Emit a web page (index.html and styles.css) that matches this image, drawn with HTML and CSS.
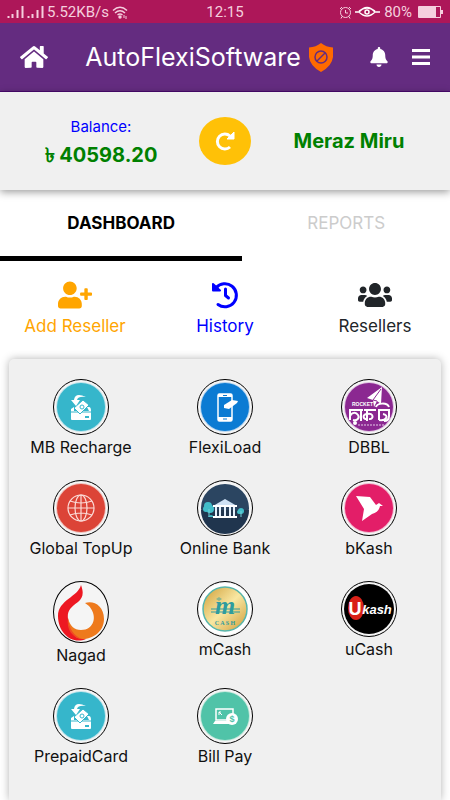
FILE: index.html
```
<!DOCTYPE html>
<html lang="en">
<head>
  <meta charset="UTF-8">
  <meta name="viewport" content="width=device-width, initial-scale=1.0">
  <title>AutoFlexiSoftware</title>
  <link rel="stylesheet" href="styles.css">
</head>
<body>
  <svg width="0" height="0" class="sprite" aria-hidden="true">
    <symbol id="deposit" viewBox="0 0 54 54">
      <circle cx="27" cy="27" r="25" fill="#bfe3ea"/>
      <circle cx="27" cy="27" r="24" fill="#36b6cb"/>
      <path d="M17 29l3-2v4h15l-2-4h2q2 0 2 4v8q0 1-1 1H18q-1 0-1-1z" fill="#fff"/>
      <path d="M17 32h20" stroke="#36b6cb"/>
      <path d="M29 20l6 5-9 9-6-6z" fill="#fff" stroke="#36b6cb"/>
      <circle cx="28" cy="27" r="2" fill="none" stroke="#36b6cb"/>
      <path d="M31 37h4" stroke="#36b6cb" stroke-width="2"/>
      <path d="M32 17Q21 12 20 20h-3l5 6 4-6h-3q1-4 9-3z" fill="#fff"/>
    </symbol>
    <symbol id="signal" viewBox="0 0 17 12">
      <path d="M1.5 10v2M5.5 8v4M10.5 4v8M15.5 0v12" stroke="currentColor" stroke-width="2"/>
    </symbol>
  </svg>

  <div class="status">
    <div class="status-left">
      <svg width="17" height="12"><use href="#signal"/></svg>
      <svg width="17" height="12"><use href="#signal"/></svg>
      <span>5.52KB/s</span>
      <svg width="16" height="13" viewBox="0 0 16 13" fill="none" stroke="currentColor" stroke-width="1.5">
        <path d="M1 4.5Q8-2 15 4.5M3 7Q8 2.500 13 7M5.500 9Q8 7 10.500 9"/>
        <circle cx="8" cy="11" r="1" fill="currentColor"/>
        <path d="M12 9v3M14 10v3" stroke-width="1"/>
      </svg>
    </div>
    <span>12:15</span>
    <div class="status-right">
      <svg width="13" height="13" viewBox="0 0 13 13" fill="none" stroke="currentColor">
        <circle cx="6.5" cy="6.5" r="5"/>
        <path d="M6.5 4v3H9M1 3l2-2M12 3l-2-2M3 10.5l-1 2M10 10.5l1 2"/>
      </svg>
      <svg class="eye" width="26" height="12" viewBox="0 0 26 12" fill="none" stroke="currentColor" stroke-width="1.5">
        <path d="M0 6h4Q12-3 20 6h5M4 6Q12 14 20 6M4 5Q12-1 20 5"/>
        <circle cx="12" cy="6" r="2"/>
      </svg>
      <span>80%</span>
      <svg class="battery" width="25" height="12" viewBox="0 0 25 12">
        <path d="M.5 .5h22v11h-22z" fill="none" stroke="currentColor"/>
        <path d="M1 1h17v10H1zM23 4h2v4h-2z" fill="currentColor"/>
      </svg>
    </div>
  </div>

  <header class="navbar">
    <a class="home" href="#" aria-label="Home">
      <svg width="28" height="26" viewBox="0 0 576 512" fill="currentColor"><path d="M280.37 148.26L96 300.11V464a16 16 0 0 0 16 16l112.06-.29a16 16 0 0 0 15.92-16V368a16 16 0 0 1 16-16h64a16 16 0 0 1 16 16v95.64a16 16 0 0 0 16 16.05L464 480a16 16 0 0 0 16-16V300L295.67 148.26a12.19 12.19 0 0 0-15.3 0zM571.6 251.47L488 182.56V44.05a12 12 0 0 0-12-12h-56a12 12 0 0 0-12 12v72.61L318.47 43a48 48 0 0 0-61 0L4.34 251.47a12 12 0 0 0-1.6 16.9l25.5 31A12 12 0 0 0 45.15 301l235.22-193.74a12.19 12.19 0 0 1 15.3 0L530.9 301a12 12 0 0 0 16.9-1.6l25.5-31a12 12 0 0 0-1.7-16.93z"/></svg>
    </a>
    <div class="brand">
      <h1>AutoFlexiSoftware</h1>
      <svg width="24" height="29" viewBox="0 0 24 29">
        <path d="M12 0Q17 4 24 4.5V14Q23 23 12 29 1 23 0 14V4.5Q7 4 12 0z" fill="#ff6a00"/>
        <circle cx="12" cy="14" r="6" fill="none" stroke="#642c80" stroke-width="1.5"/>
        <path d="M8 18l8-8" stroke="#642c80" stroke-width="1.5"/>
      </svg>
    </div>
    <button type="button" aria-label="Notifications">
      <svg width="18" height="20" viewBox="0 0 448 512" fill="currentColor"><path d="M224 512c35.32 0 63.97-28.65 63.97-64H160.03c0 35.35 28.65 64 63.97 64zm215.39-149.71c-19.32-20.76-55.47-51.99-55.47-154.29 0-77.7-54.48-139.9-127.94-155.16V32c0-17.67-14.32-32-31.98-32s-31.98 14.33-31.98 32v20.84C118.56 68.1 64.08 130.3 64.08 208c0 102.3-36.15 133.53-55.47 154.29-6 6.45-8.66 14.16-8.61 21.71.11 16.4 12.98 32 32.1 32h383.8c19.12 0 32-15.6 32.1-32 .05-7.55-2.61-15.27-8.61-21.71z"/></svg>
    </button>
    <button type="button" class="menu" aria-label="Menu">
      <svg width="18" height="16" viewBox="0 0 18 16"><path d="M0 1.5h18M0 8h18M0 14.5h18" stroke="currentColor" stroke-width="3"/></svg>
    </button>
  </header>

  <section class="account">
    <div class="balance">
      <span class="balance-label">Balance:</span>
      <strong>৳ 40598.20</strong>
    </div>
    <button type="button" class="refresh" aria-label="Refresh balance">
      <svg width="20" height="20" viewBox="0 0 20 20" fill="none" stroke="currentColor">
        <path d="M15 5A7.5 7.500 0 1 0 15 16" stroke-width="3"/>
        <path d="M19 1v7h-7z" fill="currentColor" stroke-linejoin="round"/>
      </svg>
    </button>
    <strong>Meraz Miru</strong>
  </section>

  <nav class="tabs">
    <a class="active" href="#">DASHBOARD</a>
    <a href="#">REPORTS</a>
  </nav>

  <div class="actions">
    <a class="add" href="#">
      <svg width="34" height="28" viewBox="0 0 640 512" fill="currentColor"><path d="M624 208h-64v-64c0-8.8-7.2-16-16-16h-32c-8.8 0-16 7.2-16 16v64h-64c-8.8 0-16 7.2-16 16v32c0 8.8 7.2 16 16 16h64v64c0 8.8 7.2 16 16 16h32c8.8 0 16-7.2 16-16v-64h64c8.8 0 16-7.2 16-16v-32c0-8.8-7.2-16-16-16zm-400 48c70.7 0 128-57.3 128-128S294.7 0 224 0 96 57.3 96 128s57.3 128 128 128zm89.6 32h-16.7c-22.2 10.2-46.9 16-72.9 16s-50.6-5.8-72.9-16h-16.7C60.2 288 0 348.2 0 422.4V464c0 26.5 21.5 48 48 48h352c26.5 0 48-21.5 48-48v-41.6c0-74.2-60.2-134.4-134.4-134.4z"/></svg>
      Add Reseller
    </a>
    <a class="history" href="#">
      <svg width="28" height="28" viewBox="0 0 28 28" fill="none" stroke="currentColor" stroke-width="3" stroke-linecap="round" stroke-linejoin="round">
        <path d="M5 7A11.5 11.5 0 1 1 7 23.5"/>
        <path d="M14.5 8v6.5l3 2.5"/>
        <path d="M2 3v6.5h7z" fill="currentColor" stroke-width="2"/>
      </svg>
      History
    </a>
    <a class="resellers" href="#">
      <svg width="34" height="28" viewBox="0 0 640 512" fill="currentColor"><path d="M96 224c35.3 0 64-28.7 64-64s-28.7-64-64-64-64 28.7-64 64 28.7 64 64 64zm448 0c35.3 0 64-28.7 64-64s-28.7-64-64-64-64 28.7-64 64 28.7 64 64 64zm32 32h-64c-17.6 0-33.5 7.1-45.1 18.6 40.3 22.1 68.9 62 75.1 109.4h66c17.7 0 32-14.3 32-32v-32c0-35.3-28.7-64-64-64zm-256 0c61.9 0 112-50.1 112-112S381.9 32 320 32 208 82.1 208 144s50.1 112 112 112zm76.8 32h-8.3c-20.8 10-43.9 16-68.5 16s-47.6-6-68.5-16h-8.3C179.6 288 128 339.6 128 403.2V432c0 26.5 21.5 48 48 48h288c26.5 0 48-21.5 48-48v-28.8c0-63.6-51.6-115.2-115.2-115.2zm-223.7-13.4C161.5 263.1 145.6 256 128 256H64c-35.3 0-64 28.7-64 64v32c0 17.7 14.3 32 32 32h65.9c6.3-47.4 34.9-87.3 75.2-109.4z"/></svg>
      Resellers
    </a>
  </div>

  <main class="services">
    <a href="#">
      <svg class="logo"><use href="#deposit"/></svg>
      MB Recharge
    </a>
    <a href="#">
      <svg class="logo" viewBox="0 0 54 54">
        <circle cx="27" cy="27" r="25" fill="#b5d4ee"/>
        <circle cx="27" cy="27" r="24" fill="#0b7bd3"/>
        <rect x="20" y="14" width="14" height="27" rx="1.5" fill="none" stroke="#fff" stroke-width="1.5"/>
        <path d="M20 14h14v3H20zM20 37h14v4H20z" fill="#fff"/>
        <path d="M25 15.5h4M25 39h4" stroke="#0b7bd3"/>
        <path d="M26 25l8-5 6 1-1 2-8 6-5-1z" fill="#fff"/>
      </svg>
      FlexiLoad
    </a>
    <a href="#">
      <svg class="logo" viewBox="0 0 54 54">
        <circle cx="27" cy="27" r="25" fill="#dfc3e1"/>
        <circle cx="27" cy="27" r="24" fill="#8b2891"/>
        <path d="M40 7L25 18l6 2 1 7 3-6 4 3z" fill="#fff"/>
        <path d="M39 9l-8 11 4 1" fill="none" stroke="#8b2891"/>
        <text x="10" y="26" class="rocket">ROCKET</text>
        <g fill="none" stroke="#fff" stroke-width="2" stroke-linejoin="round">
          <path d="M7 30h14M8 30v10M8 36c2-4 6-4 8-1s-1 6-5 5M19 30v11M22 30h12M25 30v11M25 34c-5 0-4 6 0 5M25 34c7-2 7 6 2 5M36 30h12M37 30v10M37 40c8 1 10-5 4-6M34 27c1-4 11-5 13 0M47 30v6c0 3-2 5-5 5"/>
        </g>
        <circle cx="13" cy="43" r="2" fill="#fff"/>
        <path d="M16 45h26" stroke="#e5c9e7" stroke-dasharray="2 1"/>
      </svg>
      DBBL
    </a>
    <a href="#">
      <svg class="logo" viewBox="0 0 54 54">
        <circle cx="27" cy="27" r="25" fill="#efc2bd"/>
        <circle cx="27" cy="27" r="24" fill="#dc4437"/>
        <g fill="none" stroke="#fbdcd8" stroke-width="1.2">
          <circle cx="27" cy="27" r="13"/>
          <ellipse cx="27" cy="27" rx="6" ry="13"/>
          <path d="M27 14v26M14 27h26M16 20q11 4 22 0M16 34q11-4 22 0"/>
        </g>
      </svg>
      Global TopUp
    </a>
    <a href="#">
      <svg class="logo" viewBox="0 0 54 54">
        <circle cx="27" cy="27" r="24" fill="#2b4561"/>
        <path d="M3 29h48a24 24 0 0 1-48 0z" fill="#20354e"/>
        <g fill="#41bdc9">
          <circle cx="10" cy="25" r="4"/><circle cx="12" cy="28" r="4"/><circle cx="8" cy="28" r="3"/>
          <circle cx="43" cy="30" r="3"/><circle cx="41" cy="31" r="2"/>
          <path d="M10 36q3-4 6 0z"/>
        </g>
        <path d="M11 28v8M43 30v6" stroke="#72d4dc"/>
        <path d="M15 25l12-7 12 7z" fill="#cfe2f5"/>
        <path d="M15 24h24v2H15zM15 35h24v2H15z" fill="#fff"/>
        <path d="M18 26v9M22 26v9M27 26v9M32 26v9M36 26v9" stroke="#e5f1fc" stroke-width="2"/>
      </svg>
      Online Bank
    </a>
    <a href="#">
      <svg class="logo" viewBox="0 0 54 54">
        <circle cx="27" cy="27" r="25" fill="#efb8cd"/>
        <circle cx="27" cy="27" r="24" fill="#e31e68"/>
        <path d="M14 15l14 1 6 8 3-2 4 3h-3q-1 6-8 8l-10 7 2-12z" fill="#fff"/>
      </svg>
      bKash
    </a>
    <a href="#">
      <svg class="logo tall" viewBox="0 0 54 60">
        <path d="M27 3c3 8 2 13-3 17-8 6-11 9-10 17 1 9 8 13 18 20C18 63 4 51 4 34 4 18 24 15 27 3z" fill="#ed1822"/>
        <path d="M31 21c8-3 19 2 19 16 0 12-10 20-22 20-8 0-14-9-14-21 2 8 6 12 13 12 13 0 17-14 8-24z" fill="#ee7a1d"/>
        <path d="M14 36c1 11 6 18 14 21-9-1-16-9-14-21z" fill="#f04b23"/>
        <circle cx="27" cy="35" r="12" fill="#f5f5f5"/>
      </svg>
      Nagad
    </a>
    <a href="#">
      <svg class="logo" viewBox="0 0 54 54">
        <defs>
          <linearGradient id="gold" x1="0" y1="0" x2="1" y2="1">
            <stop offset="0" stop-color="#cf9d35"/>
            <stop offset=".5" stop-color="#f8e7a2"/>
            <stop offset="1" stop-color="#cf9b35"/>
          </linearGradient>
        </defs>
        <circle cx="27" cy="27" r="26" fill="#fff"/>
        <circle cx="27" cy="27" r="22" fill="url(#gold)" stroke="#58b5ab" stroke-width="1.5"/>
        <path d="M13 27h29M13 30h29" stroke="#2e9c9f"/>
        <text x="27" y="32" class="m-letter">m</text>
        <path d="M18 17l3-2 3 2-3 2z" fill="#8cb58d"/>
        <text x="27" y="43" class="m-cash">C A S H</text>
      </svg>
      mCash
    </a>
    <a href="#">
      <svg class="logo" viewBox="0 0 54 54">
        <circle cx="27" cy="27" r="25"/>
        <ellipse cx="14" cy="26" rx="8" ry="12" fill="#d92118"/>
        <text x="13" y="33" class="u-letter">U</text>
        <text x="35" y="32" class="u-kash">kash</text>
      </svg>
      uCash
    </a>
    <a href="#">
      <svg class="logo"><use href="#deposit"/></svg>
      PrepaidCard
    </a>
    <a href="#">
      <svg class="logo" viewBox="0 0 54 54">
        <circle cx="27" cy="27" r="25" fill="#c5e8dc"/>
        <circle cx="27" cy="27" r="24" fill="#50c3a8"/>
        <path d="M18 31V20h17v5M18 20v11h12" fill="none" stroke="#fff" stroke-width="1.5"/>
        <path d="M17 32h14l3 3H15z" fill="#fff"/>
        <path d="M21 23l3 3m-3-3v3m0-3h2" stroke="#fff" fill="none"/>
        <circle cx="34" cy="30" r="6" fill="#fff"/>
        <text x="34" y="33" class="dollar">$</text>
      </svg>
      Bill Pay
    </a>
  </main>
</body>
</html>
```
FILE: styles.css
```
:root {
  --purple: #642c80;
  --panel: #f0f0f0;
  --green: #008000;
}

* {
  box-sizing: border-box;
}

body {
  margin: 0;
  min-height: 100vh;
  display: flex;
  flex-direction: column;
  background-color: #fff;
  color: #111;
  font-family: Inter, "Liberation Sans", sans-serif;
  font-size: 16px;
  line-height: 24px;
}

a {
  color: inherit;
  text-decoration: none;
}

button {
  border: 0;
  padding: 0;
  background: none;
  color: inherit;
  font: inherit;
  cursor: pointer;
}

svg {
  display: block;
  flex: none;
}

.sprite {
  position: absolute;
}

/* phone status bar */
.status {
  display: grid;
  grid-template-columns: 1fr auto 1fr;
  align-items: center;
  height: 23px;
  padding: 0 7px;
  background-color: #ad1759;
  color: #f5cfde;
  font-family: Roboto, sans-serif;
  font-size: 15px;
}

.status-left,
.status-right {
  display: flex;
  align-items: center;
  gap: 3px;
}

.status-right {
  justify-content: flex-end;
}

.eye {
  color: #fff;
}

.battery {
  margin-left: 3px;
}

/* top bar */
.navbar {
  display: flex;
  align-items: center;
  gap: 24px;
  height: 69px;
  padding: 0 20px;
  background-color: var(--purple);
  border-bottom: 1px solid #4b0a70;
  color: #fff;
}

.brand {
  display: flex;
  flex: 1;
  align-items: center;
  justify-content: center;
  gap: 8px;
}

.brand h1 {
  margin: 0;
  font-size: 25px;
  font-weight: 400;
  line-height: 32px;
}

/* balance */
.account {
  display: grid;
  grid-template-columns: repeat(3, 1fr);
  align-items: center;
  justify-items: center;
  height: 98px;
  padding: 0 39px;
  background-color: var(--panel);
  box-shadow: 0 2px 8px rgba(0, 0, 0, .4);
  white-space: nowrap;
}

.account strong {
  color: var(--green);
  font-size: 20px;
  font-weight: 700;
}

.balance {
  display: flex;
  flex-direction: column;
  align-items: center;
  gap: 4px;
}

.balance-label {
  color: #0000ff;
  font-size: 15px;
}

.refresh {
  display: flex;
  align-items: center;
  justify-content: center;
  width: 52px;
  height: 48px;
  border-radius: 50%;
  background-color: #ffc107;
  color: #fff;
}

/* tabs */
.tabs {
  display: grid;
  grid-template-columns: 7fr 6fr;
  font-size: 17px;
  text-align: center;
}

.tabs a {
  padding: 21px 0;
  border-bottom: 5px solid transparent;
  color: #ccc;
}

.tabs .active {
  border-color: #000;
  color: #000;
  font-weight: 700;
}

.actions {
  display: grid;
  grid-template-columns: repeat(3, 1fr);
  padding: 20px 0 21px;
  font-size: 17px;
}

.actions a,
.services a {
  display: flex;
  flex-direction: column;
  align-items: center;
}

.actions a {
  gap: 5px;
}

.add {
  color: #ffa500;
}

.history {
  color: #0000ff;
}

.resellers {
  color: #212529;
}

/* service list */
.services {
  flex: 1;
  display: grid;
  grid-template-columns: repeat(3, 1fr);
  align-content: start;
  row-gap: 21px;
  margin: 0 9px;
  padding: 20px 0;
  border-radius: 5px 5px 0 0;
  background-color: var(--panel);
  box-shadow: 0 0 8px rgba(0, 0, 0, .3);
}

.logo {
  width: 56px;
  height: 56px;
  border: 1px solid #000;
  border-radius: 50%;
  background-color: #f5f5f5;
}

.logo.tall {
  height: 62px;
}

.logo text {
  fill: #fff;
  font-family: "Liberation Sans", sans-serif;
  font-weight: 700;
  text-anchor: middle;
}

.logo .rocket {
  font-size: 5px;
  text-anchor: start;
}

.logo .m-letter {
  fill: #2e9c9f;
  font-family: "Liberation Serif", serif;
  font-size: 26px;
  font-style: italic;
}

.logo .m-cash {
  fill: #2e9c9f;
  font-family: "Liberation Serif", serif;
  font-size: 6px;
}

.logo .u-letter {
  font-size: 18px;
}

.logo .u-kash {
  font-size: 13px;
  font-style: italic;
}

.logo .dollar {
  fill: #50c3a8;
  font-size: 9px;
}
```
